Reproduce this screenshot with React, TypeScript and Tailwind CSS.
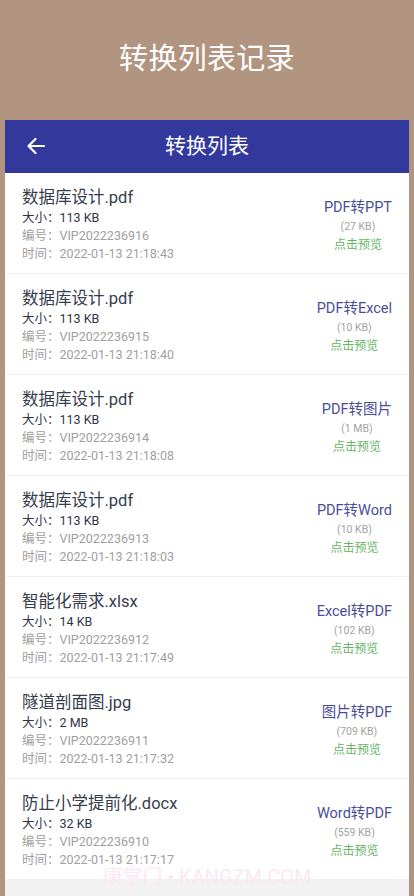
const records = [
  { name: "数据库设计.pdf", size: "113 KB", no: "VIP2022236916", time: "2022-01-13 21:18:43", type: "PDF转PPT", out: "(27 KB)" },
  { name: "数据库设计.pdf", size: "113 KB", no: "VIP2022236915", time: "2022-01-13 21:18:40", type: "PDF转Excel", out: "(10 KB)" },
  { name: "数据库设计.pdf", size: "113 KB", no: "VIP2022236914", time: "2022-01-13 21:18:08", type: "PDF转图片", out: "(1 MB)" },
  { name: "数据库设计.pdf", size: "113 KB", no: "VIP2022236913", time: "2022-01-13 21:18:03", type: "PDF转Word", out: "(10 KB)" },
  { name: "智能化需求.xlsx", size: "14 KB", no: "VIP2022236912", time: "2022-01-13 21:17:49", type: "Excel转PDF", out: "(102 KB)" },
  { name: "隧道剖面图.jpg", size: "2 MB", no: "VIP2022236911", time: "2022-01-13 21:17:32", type: "图片转PDF", out: "(709 KB)" },
  { name: "防止小学提前化.docx", size: "32 KB", no: "VIP2022236910", time: "2022-01-13 21:17:17", type: "Word转PDF", out: "(559 KB)" },
]

export default function App() {
  return (
    <div
      className="relative w-[414px] h-[896px] overflow-hidden bg-[#b29580]"
      style={{ fontFamily: 'Roboto, "Noto Sans CJK SC", sans-serif' }}
    >
      <div className="h-[120px] flex items-center justify-center pb-[2px]">
        <h1 className="text-white text-[29px] leading-none tracking-[0.3px]">转换列表记录</h1>
      </div>

      <div className="mx-[5px] h-[776px] bg-[#f2f2f2] flex flex-col">
        <div className="h-[53px] bg-[#33399c] relative flex items-center justify-center">
          <svg className="absolute left-[21px] top-[17px]" width="19" height="18" viewBox="0 0 19 18" fill="none">
            <path d="M18 9H2.5M9.5 2L2.5 9l7 7" stroke="white" strokeWidth="2.2" strokeLinecap="round" strokeLinejoin="round" />
          </svg>
          <span className="text-white text-[21px] leading-none">转换列表</span>
        </div>

        {records.map((r) => (
          <div
            key={r.no}
            className="h-[101px] bg-white border-b border-[#f1f1f1] px-[17px] pt-[14px] flex items-center justify-between"
          >
            <div className="self-start">
              <div className="text-[16.5px] leading-[22px] text-[#363d4d]">{r.name}</div>
              <div className="text-[12.5px] leading-[18px] text-[#2f3545]">大小：{r.size}</div>
              <div className="text-[12.5px] leading-[18px] text-[#a0a0a0]">编号：{r.no}</div>
              <div className="text-[12.5px] leading-[18px] text-[#a0a0a0]">时间：{r.time}</div>
            </div>
            <div className="flex flex-col items-center text-center mt-[-9px]">
              <div className="text-[14.5px] leading-[20px] text-[#4a4e99]">{r.type}</div>
              <div className="text-[10.5px] leading-[18px] text-[#a3a3a3]">{r.out}</div>
              <div className="text-[12px] leading-[18px] text-[#66b566]">点击预览</div>
            </div>
          </div>
        ))}
      </div>

      <div className="absolute left-0 right-0 top-[869px] text-center text-[20px] leading-[16px] text-[#fbe8f2] pointer-events-none">
        康掌门 • KANGZM.COM
      </div>
    </div>
  )
}
